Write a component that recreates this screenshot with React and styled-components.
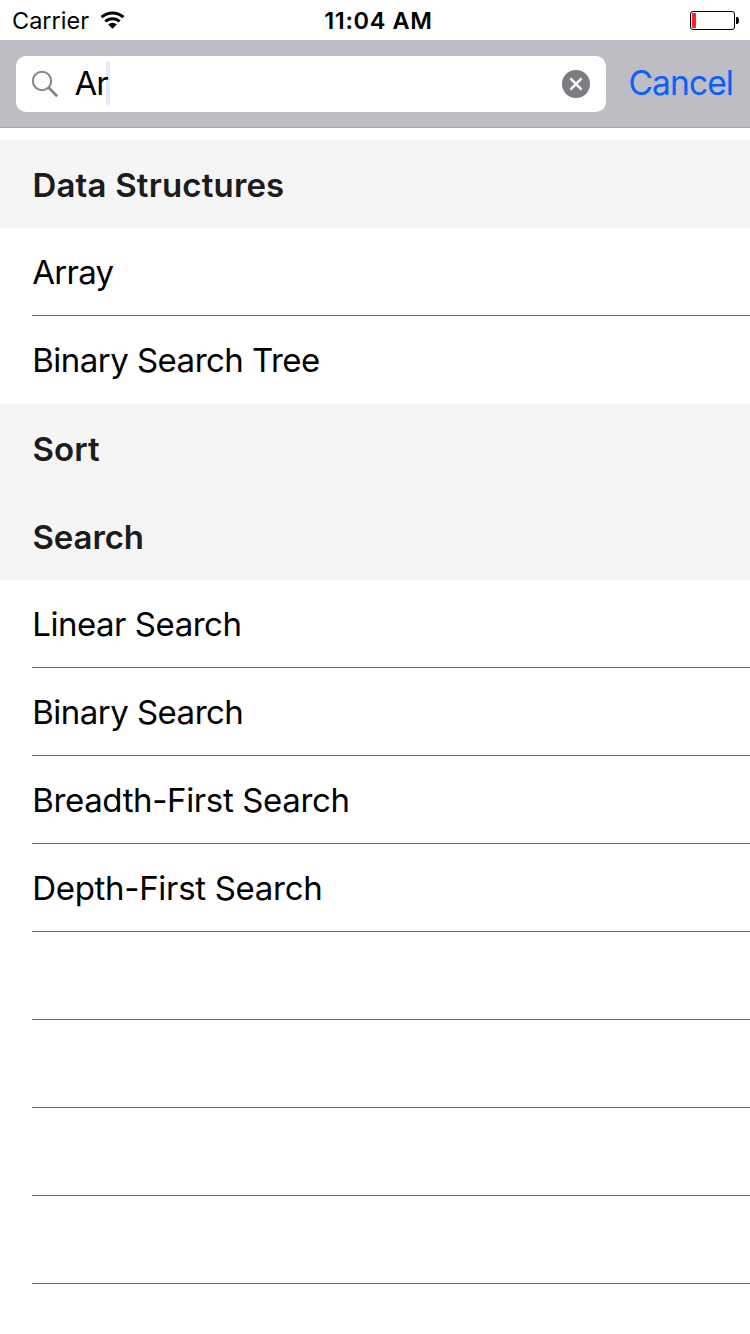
import React from 'react';
import styled, { createGlobalStyle } from 'styled-components';

const Global = createGlobalStyle`
  * { box-sizing: border-box; }
  body { margin: 0; background: #fff; font-family: Inter, Roboto, sans-serif; color: #000; }
`;
const Screen = styled.main`
  width: 750px; height: 1334px; overflow: hidden; display: flex; flex-direction: column; background: #fff;
`;
const StatusBar = styled.header`
  height: 40px; flex: none; display: grid; grid-template-columns: 1fr auto 1fr; align-items: center;
  padding: 1px 10px 0 12px; font-size: 23.5px; line-height: 39px;
`;
const Carrier = styled.div`
  display: flex; align-items: center; gap: 11px;
`;
const Clock = styled.time`
  font-weight: 600; letter-spacing: 0.65px; white-space: nowrap; padding-left: 5px;
`;
const Battery = styled.svg`
  justify-self: end; display: block;
`;
const SearchBar = styled.div`
  height: 88px; flex: none; display: flex; align-items: center; padding: 0 17px 0 16px;
  justify-content: space-between; background: #bdbdc3; border-bottom: 1px solid #a5a5aa;
`;
const Field = styled.div`
  width: 590px; height: 56px; border-radius: 10px; background: #fff; display: flex; align-items: center;
  padding: 0 15px; font-size: 33px;
`;
const Query = styled.span`
  margin-left: 15.5px; line-height: 54px; height: 56px; letter-spacing: -1px; z-index: 1;
`;
const Caret = styled.i`
  width: 4px; height: 44px; margin: 0 0 2px -1.5px; border-radius: 2px; background: #e6eafd;
`;
const Clear = styled.svg`
  margin-left: auto;
`;
const Cancel = styled.button`
  border: 0; padding: 0 0 1px; background: none; color: #0a60ff;
  font: 400 33.5px/53px Inter, sans-serif; letter-spacing: -0.9px;
`;
const Table = styled.div`
  padding-top: 12px;
`;
const SectionHeader = styled.h2`
  margin: 0; height: 88px; padding: 1px 0 0 32.5px; background: #f5f5f5; color: #1c1c1c;
  font-size: 33px; line-height: 88px; font-weight: 600; letter-spacing: ${p => p.$tracking}px;
`;
const Row = styled.div`
  height: 88px; margin-left: 32px; font-size: 33px; line-height: 88px; text-indent: 0.2px;
  border-bottom: ${p => (p.$last ? 0 : 1)}px solid #6f6f71; letter-spacing: ${p => p.$tracking || 0}px;
`;

const sections = [
  {
    title: 'Data Structures',
    tracking: 0.17,
    rows: [
      { label: 'Array', tracking: -0.7 },
      { label: 'Binary Search Tree', tracking: -0.52 },
    ],
  },
  { title: 'Sort', tracking: 0.1, rows: [] },
  {
    title: 'Search',
    tracking: -0.1,
    separatorAfterLast: true,
    rows: [
      { label: 'Linear Search', tracking: -0.47 },
      { label: 'Binary Search', tracking: -0.52 },
      { label: 'Breadth-First Search', tracking: -0.36 },
      { label: 'Depth-First Search', tracking: -0.3 },
    ],
  },
];

export default function App() {
  return (
    <Screen>
      <Global />
      <StatusBar>
        <Carrier>
          <span>Carrier</span>
          <svg width="26" height="20" viewBox="0 0 26 20">
            <g fill="none" stroke="#000" strokeWidth="3">
              <path d="M1.5 6.2a16.2 16.2 0 0 1 22 0" />
              <path d="M5.4 10.5a10.4 10.4 0 0 1 14.2 0" />
            </g>
            <path d="M12.5 17.8l-4.3-4.3a6 6 0 0 1 8.6 0z" />
          </svg>
        </Carrier>
        <Clock>11:04 AM</Clock>
        <Battery width="50" height="19" viewBox="0 0 50 19">
          <rect x=".5" y=".5" width="44" height="18" rx="2.5" fill="none" stroke="#000" />
          <rect x="2" y="2" width="4" height="15" rx=".8" fill="#fc2125" />
          <path d="M46 6h1.5q1.5 1 1.5 3.5t-1.5 3.5H46z" />
        </Battery>
      </StatusBar>
      <SearchBar>
        <Field>
          <svg width="28" height="28" viewBox="0 0 28 28" fill="none" stroke="#85858a" strokeWidth="2">
            <circle cx="11" cy="11" r="9.2" />
            <path d="M17.5 17.5L26.2 26.2" strokeWidth="2.8" />
          </svg>
          <Query>Ar</Query>
          <Caret />
          <Clear width="30" height="30" viewBox="0 0 30 30">
            <circle cx="15" cy="15" r="14" fill="#7c7c82" />
            <path d="M10.2 10.2l9.6 9.6M19.8 10.2L10.2 19.8" stroke="#fff" strokeWidth="2.6" strokeLinecap="round" />
          </Clear>
        </Field>
        <Cancel>Cancel</Cancel>
      </SearchBar>
      <Table>
        {sections.map(s => (
          <section key={s.title}>
            <SectionHeader $tracking={s.tracking}>{s.title}</SectionHeader>
            {s.rows.map((r, i) => (
              <Row key={r.label} $tracking={r.tracking} $last={!s.separatorAfterLast && i === s.rows.length - 1}>
                {r.label}
              </Row>
            ))}
          </section>
        ))}
        {[0, 1, 2, 3].map(i => <Row key={i} />)}
      </Table>
    </Screen>
  );
}
